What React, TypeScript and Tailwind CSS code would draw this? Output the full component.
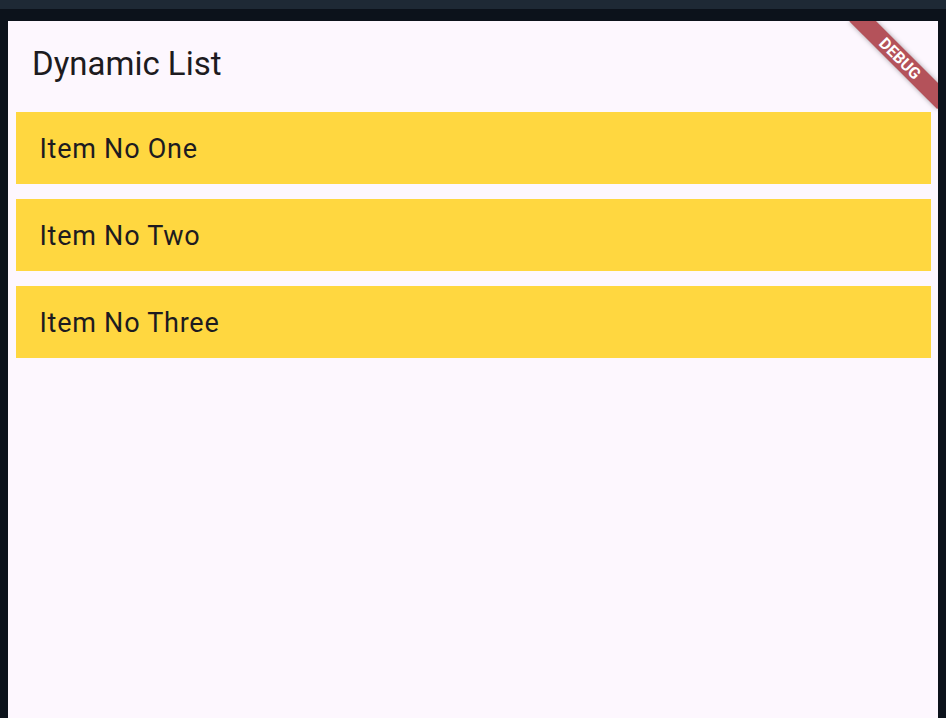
const items = ['Item No One', 'Item No Two', 'Item No Three'];

export default function App() {
  return (
    <div className="h-[718px] w-[946px] overflow-hidden bg-[#0c121b] flex flex-col font-['Roboto',sans-serif]">
      <div className="h-[9px] bg-[#1e2935] shrink-0" />
      <div className="flex-1 flex pt-[12px] px-[8px]">
        <div className="relative flex-1 bg-[#fdf7fe] overflow-hidden flex flex-col">
          <header className="h-[84px] shrink-0 flex items-center px-6">
            <h1 className="text-[33px] text-[#1d1b20] leading-none">Dynamic List</h1>
          </header>
          <ul className="flex flex-col gap-[15px] px-[7.5px] pt-[7px]">
            {items.map((item) => (
              <li
                key={item}
                className="h-[72px] bg-[#ffd740] flex items-center px-6 pt-[2px] text-[27px] tracking-[0.75px] text-[#1d1b20]"
              >
                {item}
              </li>
            ))}
          </ul>

          {/* debug ribbon */}
          <div className="absolute top-[28px] right-[-24px] w-[124px] h-[19px] rotate-45 bg-[#b4525a] shadow-[0_0_5px_rgba(0,0,0,0.35)] flex items-center justify-center">
            <span className="text-white text-[16px] font-bold leading-none">DEBUG</span>
          </div>
        </div>
      </div>
    </div>
  );
}
